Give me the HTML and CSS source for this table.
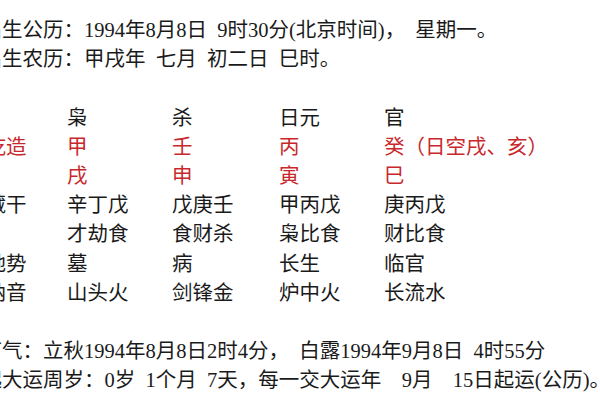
FILE: index.html
```html
<!DOCTYPE html>
<html lang="zh-CN">
<head>
<meta charset="utf-8">
<title>八字排盘</title>
<link rel="stylesheet" href="styles.css">
</head>
<body>
<div class="sheet">
  <p class="line">出生公历：1994年8月8日 9时30分(北京时间)，&nbsp;星期一。</p>
  <p class="line">出生农历：甲戌年 七月 初二日 巳时。</p>
  <div class="blank"></div>
  <div class="chart">
    <div class="label"></div><div>枭</div><div>杀</div><div>日元</div><div>官</div>
    <div class="label red">乾造</div><div class="red">甲</div><div class="red">壬</div><div class="red">丙</div><div class="red">癸（日空戌、亥）</div>
    <div class="label"></div><div class="red">戌</div><div class="red">申</div><div class="red">寅</div><div class="red">巳</div>
    <div class="label">藏干</div><div>辛丁戊</div><div>戊庚壬</div><div>甲丙戊</div><div>庚丙戊</div>
    <div class="label"></div><div>才劫食</div><div>食财杀</div><div>枭比食</div><div>财比食</div>
    <div class="label">地势</div><div>墓</div><div>病</div><div>长生</div><div>临官</div>
    <div class="label">纳音</div><div>山头火</div><div>剑锋金</div><div>炉中火</div><div>长流水</div>
  </div>
  <div class="blank"></div>
  <p class="line">节气：立秋1994年8月8日2时4分，&nbsp;白露1994年9月8日 4时55分</p>
  <p class="line">起大运周岁：0岁 1个月 7天，每一交大运年&nbsp; 9月&nbsp; 15日起运(公历)。</p>
</div>
</body>
</html>
```
FILE: styles.css
```css
html, body {
  margin: 0;
  padding: 0;
  background: #ffffff;
}
body {
  width: 600px;
  height: 400px;
  overflow: hidden;
}
.sheet {
  margin-left: -18.5px;
  padding-top: 16px;
  font-family: "Liberation Serif", "Noto Sans CJK SC", serif;
  font-size: 20.5px;
  line-height: 29.2px;
  word-spacing: 5.1px;
  color: #1a1a1a;
  white-space: nowrap;
}
.line {
  margin: 0;
}
.blank {
  height: 29.2px;
}
.chart {
  display: grid;
  grid-template-columns: 85.5px 105px 107px 105px auto;
}
.label {
  padding-left: 4px;
}
.red {
  color: #c8282c;
}
```
